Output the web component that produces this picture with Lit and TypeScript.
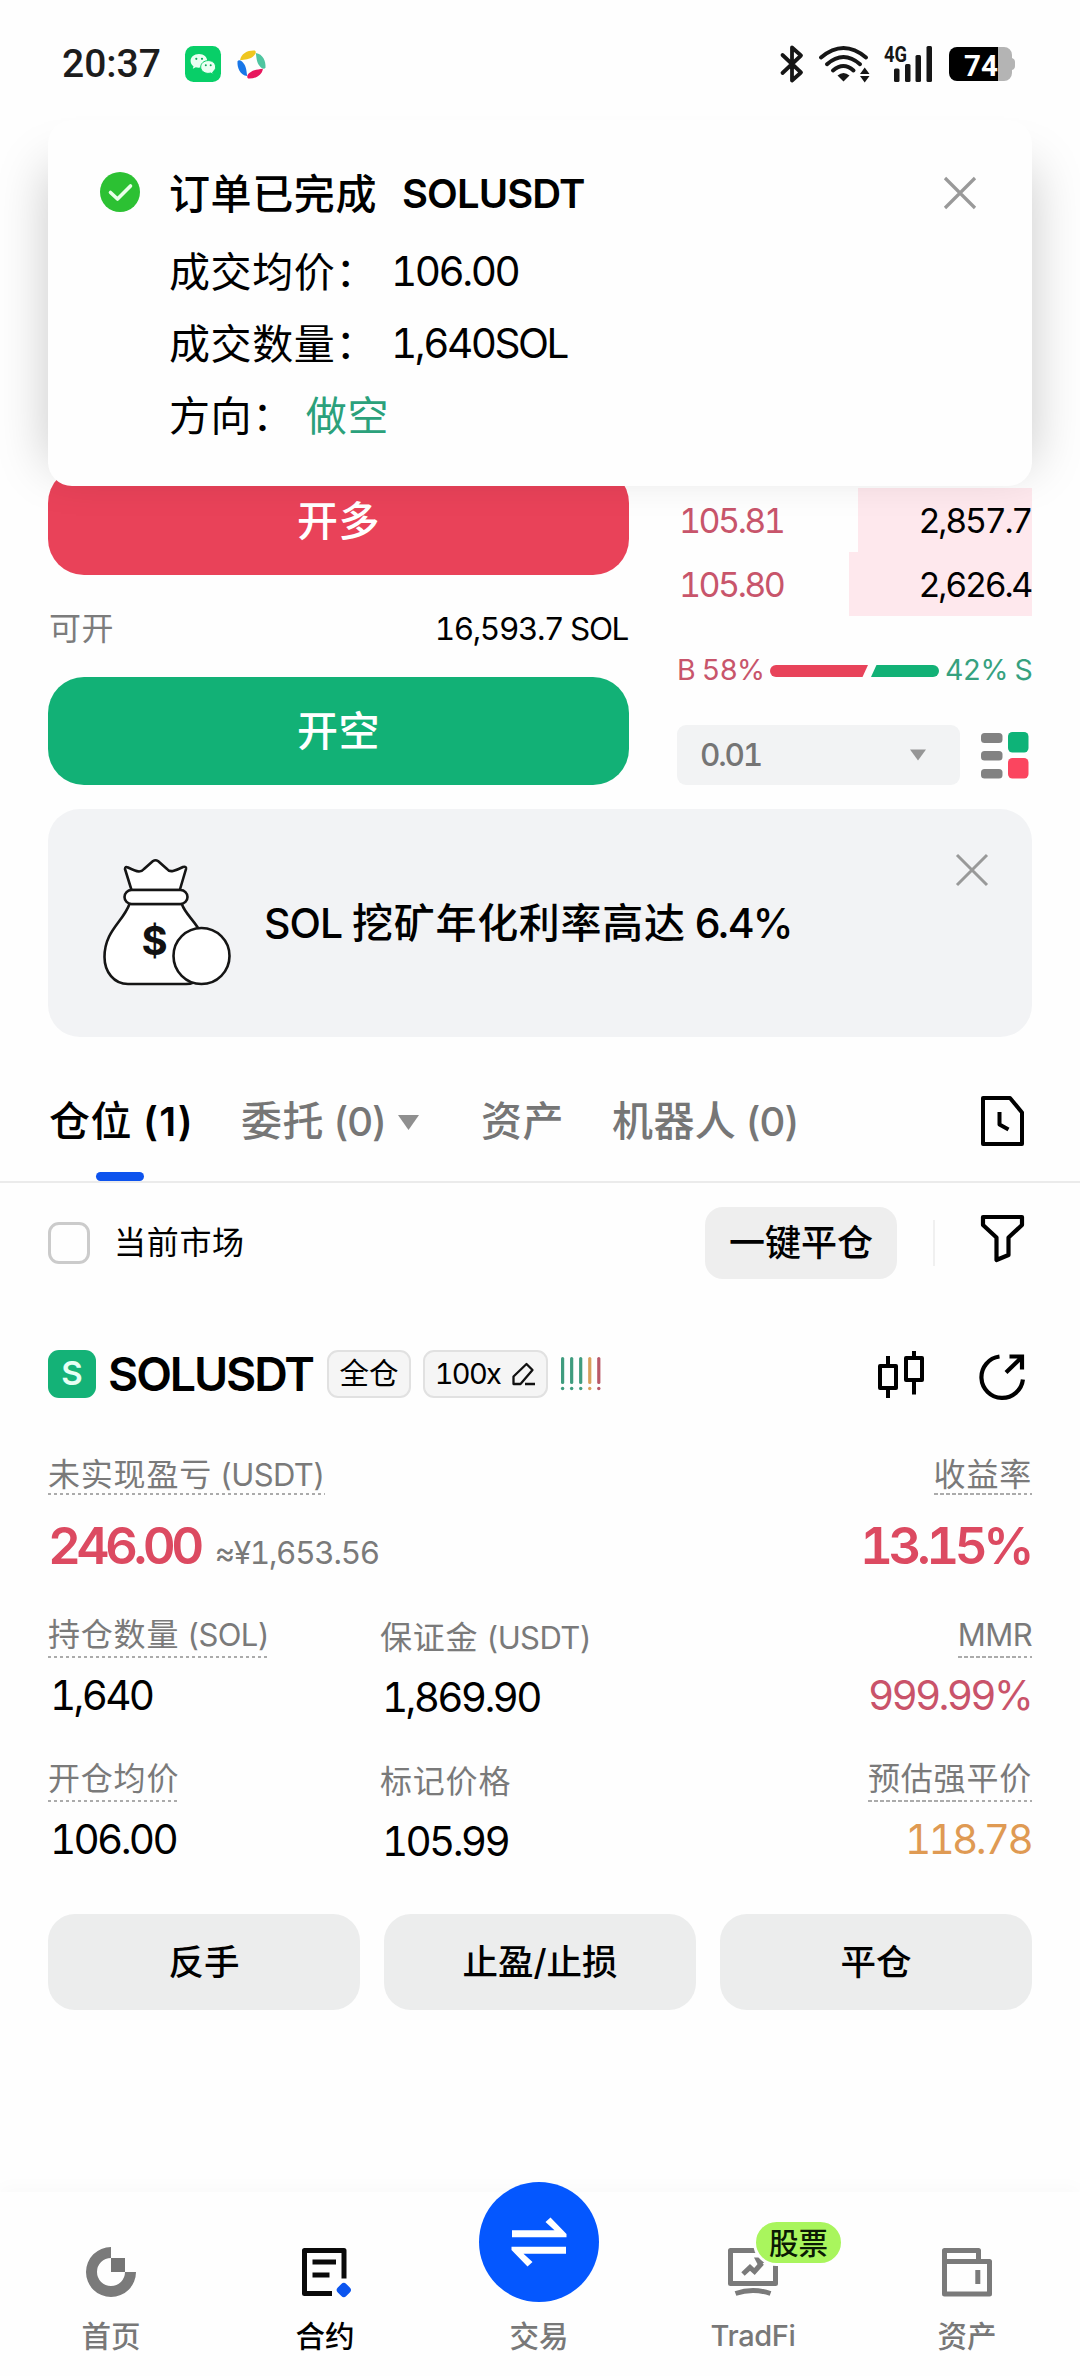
import { LitElement, html, css, svg } from "lit";
import { customElement, property } from "lit/decorators.js";
import { classMap } from "lit/directives/class-map.js";

const base = css`
  * { box-sizing: border-box; }
  svg { display: block; flex: none; overflow: visible; }
`;

/* ---------- status bar ---------- */

@customElement("status-bar")
class StatusBar extends LitElement {
  static styles = [base, css`
    :host { display: flex; height: 128px; align-items: center; padding: 0 65px 0 62px; font-family: Roboto, sans-serif; }
    .time { font-size: 39px; font-weight: 500; color: #1c1c1c; line-height: 40px; width: 123px; letter-spacing: 0; }
    .chat { margin-right: 16px; }
    .right { margin-left: auto; display: flex; align-items: center; color: #161616; }
    .bt { margin-right: 16px; }
    .wifi { margin-right: 13px; }
    .cell { margin-right: 17px; }
    .net { font: 700 22px Roboto, sans-serif; }
    .level { font: 700 30px Roboto, sans-serif; }
  `];

  render() {
    const petal = "M3 10C4 3 11 0 17.5 .5C19.4 2 18 4.5 16 6C12 9.4 8 9.2 3 10Z";
    return html`
      <span class="time">20:37</span>
      <svg class="chat" width="36" height="36" viewBox="0 0 36 36">
        <rect width="36" height="36" rx="8.5" fill="#08cf68" />
        <path d="M14 8C9 8 5.6 11.200 5.600 15c0 2.200 1.100 4 2.900 5.300l-.7 2.500 3-1.500c4 1.200 11.400-.6 11.400-6.300C22.200 11.200 19 8 14 8Z" fill="#eafff3" />
        <path d="M23.300 14.600c-4.500 0-7.600 2.900-7.600 6.500 0 4.600 5.400 7.300 10 5.900l2.600 1.300-.6-2.300c1.800-1.200 2.900-2.900 2.900-4.900 0-3.600-3-6.500-7.300-6.500Z" fill="#eafff3" stroke="#08cf68" stroke-width="1" />
        <g fill="#08a957"><circle cx="11.300" cy="12.800" r="1.100" /><circle cx="17" cy="12.800" r="1.100" /><circle cx="20.800" cy="19.300" r="1" /><circle cx="25.700" cy="19.300" r="1" /></g>
      </svg>
      <svg width="29" height="29" viewBox="0 0 28.400 28.400">
        <path d=${petal} fill="#efc61f" />
        <path d=${petal} fill="#4fc5a0" transform="rotate(90 14.200 14.200)" />
        <path d=${petal} fill="#e8175d" transform="rotate(180 14.200 14.200)" />
        <path d=${petal} fill="#1876e8" transform="rotate(270 14.200 14.200)" />
      </svg>
      <div class="right">
        <svg class="bt" width="22" height="38" viewBox="0 0 22 38">
          <path d="M1.500 10L20 27.500L11 35.500V2.500L20 10.500L1.500 28" fill="none" stroke="currentColor" stroke-width="3.800" stroke-linejoin="round" stroke-linecap="round" />
        </svg>
        <svg class="wifi" width="52" height="36" viewBox="0 0 52 36">
          <g fill="none" stroke="currentColor" stroke-width="4" stroke-linecap="round">
            <path d="M2 11.500Q24.500 -7.500 47 11.500" /><path d="M8 18.200Q24.500 3.800 41 18.200" /><path d="M14 24.500Q24.500 15.500 34.500 24.500" />
          </g>
          <path d="M18.500 29.500Q24.500 24.500 30.500 29.500L24.500 35.500Z" fill="currentColor" />
          <path d="M45.700 21.500L50.500 28H41ZM41 30H50.500L45.700 36.500Z" fill="currentColor" />
        </svg>
        <svg class="cell" width="48" height="38" viewBox="0 0 48 38">
          <text class="net" x="0" y="17" textLength="23" lengthAdjust="spacingAndGlyphs" fill="currentColor">4G</text>
          <g fill="currentColor">
            <rect x="10" y="23.500" width="5.500" height="13.500" rx="1.500" /><rect x="21" y="19" width="5.500" height="18" rx="1.500" />
            <rect x="31.500" y="10" width="5.500" height="27" rx="1.500" /><rect x="42.500" y="1" width="5.500" height="36" rx="1.500" />
          </g>
        </svg>
        <svg width="66" height="34" viewBox="0 0 66 34">
          <path d="M49 0H55a8 8 0 0 1 8 8v3q3 1 3 4v4q0 3-3 4v3a8 8 0 0 1-8 8H49Z" fill="#b4b4b4" />
          <path d="M49 0H8a8 8 0 0 0-8 8V26a8 8 0 0 0 8 8H49Z" fill="#000" />
          <text class="level" x="15" y="29" textLength="34" lengthAdjust="spacingAndGlyphs" fill="#fff">74</text>
        </svg>
      </div>`;
  }
}

/* ---------- completed order toast ---------- */

@customElement("order-toast")
class OrderToast extends LitElement {
  static styles = [base, css`
    :host { display: block; }
    :host::before { content: ""; position: absolute; inset: 48px 0 22px; box-shadow: 0 0 48px rgba(0, 0, 0, 0.21); z-index: -1; }
    .card { height: 100%; background: #fefefe; border-radius: 24px; display: flex; align-items: flex-start; padding: 38px 56px 0 52px; }
    .ok { margin-top: 14px; }
    .body { margin-left: 29px; flex: 1; display: flex; flex-direction: column; font-size: 41px; line-height: 72px; }
    .line { display: flex; height: 72px; letter-spacing: 0.6px; }
    .title { font-weight: 500; height: 78px; gap: 25px; }
    .pair { font-size: 40px; letter-spacing: -0.9px; font-weight: 600; }
    .num { font-size: 40.500px; letter-spacing: -2.500px; padding-left: 14px; }
    .side { color: #2ba17b; padding-left: 12px; }
    .x { margin-top: 19px; }
  `];

  render() {
    return html`<div class="card">
      <svg class="ok" width="40" height="40" viewBox="0 0 40 40">
        <circle cx="20" cy="20" r="20" fill="#2cc133" />
        <path d="M10.500 20.500L17.500 27L30.500 14" fill="none" stroke="#eaffea" stroke-width="3.600" stroke-linecap="round" stroke-linejoin="round" />
      </svg>
      <div class="body">
        <div class="line title"><span>订单已完成</span><span class="pair">SOLUSDT</span></div>
        <div class="line"><span>成交均价：</span><span class="num">106.00</span></div>
        <div class="line"><span>成交数量：</span><span class="num">1,640SOL</span></div>
        <div class="line"><span>方向：</span><span class="side">做空</span></div>
      </div>
      <svg class="x" width="32" height="32" viewBox="0 0 32 32"><path d="M1 1L31 31M31 1L1 31" stroke="#999" stroke-width="3.200" /></svg>
    </div>`;
  }
}

/* ---------- order form and book ---------- */

@customElement("trade-panel")
class TradePanel extends LitElement {
  static styles = [base, css`
    :host { display: flex; justify-content: space-between; padding: 339px 48px 0; }
    .form { width: 581px; }
    .btn { height: 108px; padding-top: 2px; border-radius: 36px; display: flex; align-items: center; justify-content: center; color: #fff; font-size: 41px; font-weight: 500; letter-spacing: 0.6px; }
    .long { background: #e94259; }
    .short { background: #12b176; }
    .avail { height: 102px; padding-top: 6px; display: flex; align-items: center; justify-content: space-between; font-size: 31.500px; }
    .muted { color: #7c7c7c; font-size: 32px; letter-spacing: 0.5px; padding-left: 1px; }
    .avail .num { letter-spacing: -1.400px; padding-right: 1px; }
    .book { width: 355px; padding-top: 21px; }
    .level { height: 64px; padding: 2px 1px 0 2px; display: flex; justify-content: space-between; align-items: center; font-size: 34px; letter-spacing: -2.300px; background: linear-gradient(#fee8ed, #fee8ed) right / var(--depth) 100% no-repeat; }
    .price { color: #c8556b; letter-spacing: -2.500px; }
    .ratio { height: 109px; display: flex; align-items: center; justify-content: space-between; font-size: 28.500px; letter-spacing: -0.8px; }
    .buy { color: #c8556b; }
    .sell { color: #36a17f; }
    .tools { display: flex; align-items: center; justify-content: space-between; padding-right: 3px; }
    .select { width: 283px; height: 60px; border-radius: 9px; background: #f2f3f4; display: flex; align-items: center; justify-content: space-between; padding: 0 34px 0 23px; color: #757575; font-size: 31.500px; font-weight: 500; letter-spacing: -2.200px; }
  `];

  render() {
    const levels: [string, string, number][] = [["105.81", "2,857.7", 174], ["105.80", "2,626.4", 183]];
    return html`
      <div class="form">
        <div class="btn long">开多</div>
        <div class="avail"><span class="muted">可开</span><span class="num">16,593.7 SOL</span></div>
        <div class="btn short">开空</div>
      </div>
      <div class="book">
        ${levels.map(([p, q, w]) => html`<div class="level" style="--depth:${w}px"><span class="price">${p}</span><span>${q}</span></div>`)}
        <div class="ratio">
          <span class="buy">B 58%</span>
          <svg width="169" height="12" viewBox="0 0 169 12">
            <path d="M6 0H98L92.500 12H6A6 6 0 0 1 6 0Z" fill="#e8435a" />
            <path d="M106.500 0H163a6 6 0 0 1 0 12H101Z" fill="#12b176" />
          </svg>
          <span class="sell">42% S</span>
        </div>
        <div class="tools">
          <div class="select"><span>0.01</span><svg width="16" height="12" viewBox="0 0 16 12"><path d="M0 .5H16L8 11.500Z" fill="#969696" /></svg></div>
          <svg width="48" height="48" viewBox="0 0 48 48">
            <g fill="#828282"><rect y="2" width="21.500" height="10" rx="3.500" /><rect y="20" width="21.500" height="9.500" rx="3.500" /><rect y="38" width="21.500" height="9.500" rx="3.500" /></g>
            <rect x="27" y="1" width="20.500" height="20.500" rx="4.500" fill="#0eb378" /><rect x="27" y="27" width="20.500" height="20.500" rx="4.500" fill="#fb455f" />
          </svg>
        </div>
      </div>`;
  }
}

/* ---------- promo banner ---------- */

@customElement("promo-banner")
class PromoBanner extends LitElement {
  static styles = [base, css`
    :host { display: flex; align-items: flex-start; height: 228px; margin: 24px 48px 0; padding: 50px 44px 0 55px; border-radius: 32px; background: #f2f3f5; }
    .text { flex: 1; margin-left: 33px; font-size: 41px; line-height: 64px; padding-top: 32px; font-weight: 500; letter-spacing: 0.7px; white-space: pre; font-variant-numeric: normal; }
    .coin { letter-spacing: -1px; }
    .rate { letter-spacing: -1.900px; }
    .x { margin-top: -5px; }
    .dollar { font: 700 40px Inter, sans-serif; }
  `];

  render() {
    return html`
      <svg width="128" height="127" viewBox="0 0 128 127">
        <g fill="#fff" stroke="#151515" stroke-width="2.600" stroke-linejoin="round">
          <path d="M28.500 31L22 10Q22 7 25 8.500Q32 12 36 12.500Q39 12.500 41 10L50 2Q52.500 .5 55 2L64 10Q66 12.800 70 12Q74 11 80 8Q83.500 7 83 10L76.800 31Z" />
          <path d="M26.500 45C20 63 1.500 72 1.500 98C1.500 113 11 125 25 125H83C100 125 103 108 103 96C103 68 84 60 78.800 45Z" />
          <rect x="21.500" y="31" width="63" height="14" rx="7" />
          <circle cx="98.500" cy="97" r="28" />
        </g>
        <text class="dollar" x="51.500" y="96" text-anchor="middle" fill="#111">$</text>
      </svg>
      <div class="text"><span class="coin">SOL </span>挖矿年化利率高达<span class="rate"> 6.4%</span></div>
      <svg class="x" width="32" height="32" viewBox="0 0 32 32"><path d="M1 1L31 31M31 1L1 31" stroke="#999" stroke-width="3" /></svg>`;
  }
}

/* ---------- tabs ---------- */

@customElement("position-tabs")
class PositionTabs extends LitElement {
  static styles = [base, css`
    :host { display: flex; height: 146px; border-bottom: 2px solid #ebebeb; padding: 24px 56px 0 49px; font-size: 41px; color: #767676; font-weight: 500; font-variant-numeric: normal; }
    .tab { position: relative; display: flex; align-items: center; height: 120px; padding-top: 2px; white-space: pre; letter-spacing: 0.4px; }
    .on { color: #000; }
    .on .n { font-weight: 600; letter-spacing: 1.200px; }
    .on::after { content: ""; position: absolute; left: 47px; bottom: 0; width: 48px; height: 9px; border-radius: 5px; background: #0d53ee; }
    .t1 { width: 192px; }
    .t2 { width: 240px; }
    .t3 { width: 131px; }
    .n { font-size: 40px; letter-spacing: -1px; }
    .caret { margin-left: 12px; }
    .history { margin: 35px 0 0 auto; }
  `];

  render() {
    return html`
      <div class="tab on t1">仓位<span class="n"> (1)</span></div>
      <div class="tab t2">委托<span class="n"> (0)</span><svg class="caret" width="21" height="15" viewBox="0 0 21 15"><path d="M0 0H21L10.500 15Z" fill="#8f8f8f" /></svg></div>
      <div class="tab t3">资产</div>
      <div class="tab">机器人<span class="n"> (0)</span></div>
      <svg class="history" width="43" height="50" viewBox="0 0 43 50">
        <path d="M2 2H29L41 16.500V48H2ZM18.500 16V28.500L27.500 33.500" fill="none" stroke="#000" stroke-width="4" stroke-linejoin="round" />
      </svg>`;
  }
}

@customElement("filter-row")
class FilterRow extends LitElement {
  static styles = [base, css`
    :host { display: flex; align-items: center; height: 120px; padding: 0 56px 0 48px; }
    .box { width: 42px; height: 42px; border: 3px solid #cbcbcb; border-radius: 11px; margin-right: 24px; }
    .label { font-size: 32px; letter-spacing: 0.7px; }
    .close { margin-left: auto; width: 192px; height: 72px; padding-top: 2px; border-radius: 18px; background: #eee; display: flex; align-items: center; justify-content: center; font-size: 36px; font-weight: 500; }
    .rule { width: 2px; height: 46px; background: #f0f0f0; margin: 0 46px 0 36px; }
    .funnel { margin-bottom: 9px; }
  `];

  render() {
    return html`
      <span class="box"></span><span class="label">当前市场</span>
      <span class="close">一键平仓</span><span class="rule"></span>
      <svg class="funnel" width="43" height="47" viewBox="0 0 43 47">
        <path d="M2 2H41V10L27.500 22.500V40L15.500 45V22.500L2 10Z" fill="none" stroke="#000" stroke-width="4.200" stroke-linejoin="round" />
      </svg>`;
  }
}

/* ---------- position card ---------- */

const labelStyle = css`
  .label { line-height: 40px; font-size: 32px; letter-spacing: 0.8px; color: #7a7a7a; background: repeating-linear-gradient(90deg, #ababab 0 3.500px, transparent 3.500px 6px) bottom / 100% 2px no-repeat; white-space: pre; }
  .lat { font-size: 31px; letter-spacing: -0.600px; }
`;

@customElement("stat-cell")
class StatCell extends LitElement {
  @property() label = "";
  @property() value = "";
  @property() tone = "";
  @property({ type: Boolean }) plain = false;
  @property({ type: Boolean }) end = false;

  static styles = [base, labelStyle, css`
    :host { display: block; }
    .cell { display: flex; flex-direction: column; align-items: flex-start; height: 107px; }
    .end { align-items: flex-end; }
    .label { height: 43px; }
    .value { margin-top: 12px; line-height: 52px; font-size: 40.500px; letter-spacing: -2.700px; padding: 0 1px 0 2px; }
    .plain { padding-top: 3px; height: 110px; }
    .plain .label { background: none; }
    .plain .value { margin-top: 11px; }
    .red { color: #c9536a; }
    .orange { color: #df9a53; }
  `];

  render() {
    const [cjk, lat] = this.label.split("|");
    return html`<div class=${classMap({ cell: true, end: this.end, plain: this.plain })}>
      <span class="label">${cjk}<span class="lat">${lat ?? ""}</span></span>
      <span class=${classMap({ value: true, red: this.tone === "red", orange: this.tone === "orange" })}>${this.value}</span>
    </div>`;
  }
}

@customElement("position-card")
class PositionCard extends LitElement {
  static styles = [base, labelStyle, css`
    :host { display: block; padding: 47px 48px 0; }
    .head { display: flex; align-items: center; height: 48px; }
    .badge { width: 48px; height: 48px; border-radius: 11px; background: #14b277; color: #e6fff4; font-size: 33px; font-weight: 600; display: flex; align-items: center; justify-content: center; }
    .name { margin-left: 12px; width: 219px; font-size: 46.500px; font-weight: 600; letter-spacing: -2.100px; line-height: 48px; }
    .tag { height: 48px; border: 2px solid #e1e1e1; border-radius: 11px; background: #f5f5f5; display: flex; align-items: center; justify-content: center; font-size: 29.500px; width: 84px; margin-right: 12px; }
    .lev { width: 125px; gap: 12px; font-size: 29px; letter-spacing: -1.700px; }
    .candles { margin-left: auto; margin-right: 55px; }
    .share { margin: 5px 7px 0 0; }
    .pnl { display: flex; justify-content: space-between; margin-top: 57px; height: 121px; }
    .col { display: flex; flex-direction: column; align-items: flex-start; }
    .end { align-items: flex-end; }
    .label { height: 40px; }
    .big { display: flex; align-items: baseline; margin-top: 21px; line-height: 60px; font-size: 51px; font-weight: 600; color: #dc4a61; letter-spacing: -4.500px; }
    .end .big { padding-right: 2px; }
    .fiat { font-size: 31.500px; font-weight: 400; color: #7a7a7a; letter-spacing: -1.300px; margin-left: 15px; }
    .grid { display: grid; grid-template-columns: 332px 1fr 1fr; row-gap: 37px; margin-top: 39px; height: 251px; grid-auto-rows: 107px; }
    .actions { display: grid; grid-template-columns: repeat(3, 1fr); gap: 24px; margin-top: 48px; }
    .action { height: 96px; padding-top: 2px; border-radius: 27px; background: #eceded; display: flex; align-items: center; justify-content: center; font-size: 35.500px; font-weight: 500; }
  `];

  render() {
    const bars = ["#3f9c7e", "#3f9c7e", "#3f9c7e", "#d9a05c", "#b95868"];
    return html`
      <div class="head">
        <span class="badge">S</span><span class="name">SOLUSDT</span>
        <span class="tag">全仓</span>
        <span class="tag lev">100x
          <svg width="24" height="24" viewBox="0 0 24 24"><path d="M1.500 22V14.500L14.500 2L20.500 8L8.500 22ZM13 22H23" fill="none" stroke="#111" stroke-width="2.300" stroke-linejoin="round" /></svg>
        </span>
        <svg width="42" height="34" viewBox="0 0 42 34">
          ${bars.map((c, i) => svg`<rect x=${1 + i * 9.050} y="0" width="3.200" height="27" rx="1.600" fill=${c} /><circle cx=${2.600 + i * 9.050} cy="31.500" r="1.700" fill=${c} />`)}
        </svg>
        <svg class="candles" width="46" height="47" viewBox="0 0 46 47">
          <g fill="none" stroke="#000" stroke-width="4" stroke-linejoin="round">
            <rect x="2" y="15" width="16" height="22" /><path d="M10 5V15M10 37V47" />
            <rect x="28" y="7" width="16" height="22" /><path d="M36 0V7M36 29V43.500" />
          </g>
        </svg>
        <svg class="share" width="46" height="46" viewBox="0 0 46 46">
          <path d="M20.500 2.500A20.800 20.800 0 1 0 43.900 25.500M27 18.500L42 4M30.500 2.500H43V15.500" fill="none" stroke="#000" stroke-width="4.200" />
        </svg>
      </div>
      <div class="pnl">
        <div class="col"><span class="label">未实现盈亏<span class="lat"> (USDT)</span></span><div class="big"><span>246.00</span><span class="fiat">≈¥1,653.56</span></div></div>
        <div class="col end"><span class="label">收益率</span><div class="big"><span>13.15%</span></div></div>
      </div>
      <div class="grid">
        <stat-cell label="持仓数量| (SOL)" value="1,640"></stat-cell>
        <stat-cell plain label="保证金| (USDT)" value="1,869.90"></stat-cell>
        <stat-cell end label="|MMR" value="999.99%" tone="red"></stat-cell>
        <stat-cell label="开仓均价" value="106.00"></stat-cell>
        <stat-cell plain label="标记价格" value="105.99"></stat-cell>
        <stat-cell end label="预估强平价" value="118.78" tone="orange"></stat-cell>
      </div>
      <div class="actions"><span class="action">反手</span><span class="action">止盈/止损</span><span class="action">平仓</span></div>`;
  }
}

/* ---------- bottom navigation ---------- */

@customElement("bottom-nav")
class BottomNav extends LitElement {
  static styles = [base, css`
    :host { display: flex; height: 184px; padding: 0 6px 0 4px; box-shadow: 0 -6px 16px rgba(0, 0, 0, 0.02); background: #fefefe; }
    .item { position: relative; width: 214px; display: flex; flex-direction: column; align-items: center; padding-top: 55px; color: #787878; font-size: 29.500px; font-weight: 500; line-height: 40px; }
    .item svg { margin-bottom: 19px; }
    .on { color: #000; }
    .mid { padding-top: 0; }
    .mid svg { margin: -10px 0 14px; }
    .lat { font-size: 29px; letter-spacing: -0.4px; }
    .hot { position: absolute; left: 107px; top: 27px; width: 91px; height: 47px; border: 3px solid #fefefe; border-radius: 24px; background: #a9f55d; color: #0b1a04; font-size: 29.500px; display: flex; align-items: center; justify-content: center; }
  `];

  render() {
    return html`
      <div class="item">
        <svg width="50" height="50" viewBox="0 0 50 50"><path d="M25 0A25 25 0 1 0 50 25H39A14 14 0 1 1 25 11Z" fill="#7a7a7a" /><rect x="25" y="11" width="14" height="14" fill="#757575" /></svg>首页
      </div>
      <div class="item on">
        <svg width="46" height="50" viewBox="0 -1 46 50">
          <path d="M42 30.500V2.500H2.500V45.500H30" fill="none" stroke="#0a0a0a" stroke-width="5" stroke-linejoin="round" />
          <path d="M10.500 14H34M10.500 27H27.500" stroke="#0a0a0a" stroke-width="5" />
          <rect x="35.800" y="36" width="12" height="12" rx="3.500" fill="#0b55ef" transform="rotate(45 41.800 42)" />
        </svg>合约
      </div>
      <div class="item mid">
        <svg width="120" height="120" viewBox="0 0 120 120"><circle cx="60" cy="60" r="60" fill="#0457ff" />
          <path d="M33 55.300V48.300H75.500L66.500 40L71.500 35.500L87.500 52V55.300Z" fill="#fff" />
          <path d="M33 55.300V48.300H75.500L66.500 40L71.500 35.500L87.500 52V55.300Z" fill="#fff" transform="rotate(180 60 60)" /></svg>交易
      </div>
      <div class="item">
        <svg width="50" height="50" viewBox="0 -1 50 50">
          <g fill="none" stroke="#7a7a7a" stroke-width="5" stroke-linejoin="round">
            <rect x="2.500" y="2.500" width="45" height="33" />
            <path d="M15 26L22 19.500L26.500 23.500L34 15" stroke-linejoin="miter" /><path d="M7.500 45.500Q25 39.500 42.500 45.500" />
          </g>
          <path d="M26 9.500H32L36.500 14L31 19Z" fill="#7a7a7a" />
        </svg><span class="lat">TradFi</span><span class="hot">股票</span>
      </div>
      <div class="item">
        <svg width="50" height="50" viewBox="0 -1 50 50">
          <path d="M2.500 13V2.500H36.500V13M2.500 13.500H47.500V46H2.500ZM35.800 22V36" fill="none" stroke="#7a7a7a" stroke-width="5" stroke-linejoin="round" />
        </svg>资产
      </div>`;
  }
}

@customElement("app-root")
class AppRoot extends LitElement {
  static styles = [base, css`
    :host { display: flex; flex-direction: column; position: relative; width: 1080px; height: 2376px; overflow: hidden; background: #fefefe; color: #000; font-family: Inter, "Noto Sans CJK SC", sans-serif; font-variant-numeric: tabular-nums; line-height: 1.2; }
    .toast { position: absolute; z-index: 1; left: 48px; top: 120px; width: 984px; height: 366px; }
    .nav { margin-top: auto; }
  `];

  render() {
    return html`
      <status-bar></status-bar>
      <order-toast class="toast"></order-toast>
      <trade-panel></trade-panel>
      <promo-banner></promo-banner>
      <position-tabs></position-tabs>
      <filter-row></filter-row>
      <position-card></position-card>
      <bottom-nav class="nav"></bottom-nav>`;
  }
}
